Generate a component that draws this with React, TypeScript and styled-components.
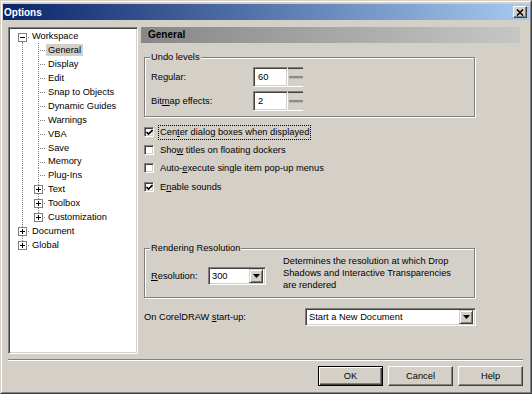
import React from "react"
import styled, { createGlobalStyle } from "styled-components"

const GlobalStyle = createGlobalStyle`
    html, body {
        margin: 0;
        padding: 0;
        background: #d4d0c8;
    }
    body {
        font-family: "Liberation Sans", Arial, sans-serif;
        font-size: 9.3px;
        color: #000;
    }
    * {
        box-sizing: border-box;
    }
`

const Window = styled.div`
    width: 532px;
    height: 394px;
    background: #d4d0c8;
    border: 1px solid;
    border-color: #d4d0c8 #404040 #404040 #d4d0c8;
    display: flex;
    flex-direction: column;
`

const Frame = styled.div`
    flex: 1;
    border: 1px solid;
    border-color: #fff #808080 #808080 #fff;
    padding: 2px 1px 1px 1px;
    display: flex;
    flex-direction: column;
`

const TitleBar = styled.div`
    height: 16px;
    background: linear-gradient(to right, #0a246a, #a6caf0);
    display: flex;
    align-items: center;
    justify-content: space-between;
    padding: 0 2px 0 1px;
`

const TitleText = styled.span`
    color: #fff;
    font-weight: bold;
    font-size: 10px;
`

const CloseButton = styled.div`
    width: 14px;
    height: 12px;
    background: #d4d0c8;
    border: 1px solid;
    border-color: #fff #404040 #404040 #fff;
    box-shadow: inset -1px -1px 0 #808080;
    display: flex;
    align-items: center;
    justify-content: center;
`

const Body = styled.div`
    flex: 1;
    display: flex;
    flex-direction: column;
    padding: 7px 6px 0 5px;
`

const Main = styled.div`
    display: flex;
    height: 327px;
`

const Sunken = styled.div`
    border: 1px solid;
    border-color: #808080 #fff #fff #808080;
    box-shadow: inset 1px 1px 0 #404040, inset -1px -1px 0 #d4d0c8;
    background: #fff;
`

const TreePanel = styled(Sunken)`
    width: 130px;
    padding: 1.5px 2px 2px 5px;
`

const TreeRowBox = styled.div`
    display: flex;
    align-items: center;
    height: 13.9px;
`

const GuideCell = styled.div<{ $v: "none" | "full" | "top" | "bottom"; $h: boolean }>`
    position: relative;
    width: 16px;
    height: 100%;
    flex: none;

    &::before {
        content: "";
        display: ${({ $v }) => ($v === "none" ? "none" : "block")};
        position: absolute;
        left: 8px;
        width: 1px;
        top: ${({ $v }) => ($v === "bottom" ? "50%" : "0")};
        height: ${({ $v }) => ($v === "full" ? "100%" : "50%")};
        background-image: linear-gradient(to bottom, #808080 50%, transparent 50%);
        background-size: 1px 2px;
    }

    &::after {
        content: "";
        display: ${({ $h }) => ($h ? "block" : "none")};
        position: absolute;
        left: 9px;
        top: 7px;
        width: 7px;
        height: 1px;
        background-image: linear-gradient(to right, transparent 50%, #808080 50%);
        background-size: 2px 1px;
    }
`

const Expander = styled.svg`
    position: absolute;
    left: 4px;
    top: 3px;
    z-index: 1;
`

const TreeLabel = styled.span<{ $selected?: boolean }>`
    padding: 0 2px;
    height: 12px;
    line-height: 12px;
    white-space: nowrap;
    background: ${({ $selected }) => ($selected ? "#d4d0c8" : "transparent")};
`

const RightPanel = styled.div`
    flex: 1;
    margin-left: 3px;
    display: flex;
    flex-direction: column;
`

const PageHeader = styled.div`
    height: 16px;
    line-height: 16px;
    margin-right: 3px;
    padding-left: 7px;
    font-weight: bold;
    font-size: 10px;
    background: linear-gradient(to right, #878787, #c6c6c6);
`

const Group = styled.fieldset<{ $top: number }>`
    width: 331px;
    margin: ${({ $top }) => $top}px 0 0 3px;
    padding: 0 5px 0 5px;
    border: 1px solid #808080;
    box-shadow: inset 1px 1px 0 #fff, 1px 1px 0 #fff;
    min-inline-size: 0;
`

const Legend = styled.legend`
    padding: 0 1px;
    line-height: 13px;
    background: #d4d0c8;
`

const UndoContent = styled.div`
    display: flex;
    flex-direction: column;
    gap: 4px;
    padding: 3px 0 5px 0;
`

const FieldRow = styled.div`
    display: flex;
    align-items: center;
`

const FieldLabel = styled.span<{ $width: number }>`
    width: ${({ $width }) => $width}px;
    padding-left: 1px;
`

const NumberInput = styled(Sunken)`
    width: 35px;
    height: 20px;
    padding-left: 4px;
    display: flex;
    align-items: center;
`

const Spin = styled.div`
    width: 15px;
    height: 20px;
    border-top: 1px solid #808080;
    box-shadow: inset 0 1px 0 #404040;
    border-bottom: 1px solid #fff;
    display: flex;
    align-items: center;
    justify-content: flex-end;

    &::after {
        content: "";
        width: 14px;
        height: 2px;
        background: #8c8c8c;
        box-shadow: 0 1px 0 #bdbab2;
    }
`

const CheckList = styled.div`
    display: flex;
    flex-direction: column;
    margin-top: 6px;
    margin-left: 3px;
`

const CheckRow = styled.div<{ $gap?: number }>`
    display: flex;
    align-items: center;
    height: 18px;
    margin-top: ${({ $gap }) => $gap ?? 0}px;
`

const CheckBox = styled(Sunken)`
    width: 10px;
    height: 10px;
    margin-right: 5px;
    display: flex;
    align-items: center;
    justify-content: center;
`

const CheckText = styled.span<{ $focused?: boolean }>`
    padding: 1px 1px;
    margin-left: -1px;
    border: 1px ${({ $focused }) => ($focused ? "dotted #000" : "solid transparent")};
    line-height: 11px;
`

const U = styled.span`
    text-decoration: underline;
`

const RenderContent = styled.div`
    display: flex;
    align-items: flex-start;
    padding-bottom: 6px;
`

const ResolutionBlock = styled.div`
    display: flex;
    align-items: center;
    margin-top: 12px;
`

const Description = styled.div`
    width: 175px;
    margin-left: 17px;
    line-height: 12px;
`

const SelectBox = styled(Sunken)<{ $width: number }>`
    width: ${({ $width }) => $width}px;
    height: 18px;
    display: flex;
    align-items: center;
    padding: 2px 2px 2px 3px;
`

const SelectValue = styled.span`
    flex: 1;
    white-space: nowrap;
    overflow: hidden;
`

const DropButton = styled.div`
    width: 14px;
    height: 14px;
    background: #d4d0c8;
    border: 1px solid;
    border-color: #d4d0c8 #404040 #404040 #d4d0c8;
    box-shadow: inset 1px 1px 0 #fff, inset -1px -1px 0 #808080;
    display: flex;
    align-items: center;
    justify-content: center;
`

const StartupRow = styled.div`
    display: flex;
    align-items: center;
    margin-top: 10px;
    margin-left: 2px;
`

const Separator = styled.div`
    height: 2px;
    margin-top: 5px;
    border-top: 1px solid #808080;
    border-bottom: 1px solid #fff;
`

const ButtonRow = styled.div`
    display: flex;
    justify-content: flex-end;
    gap: 5px;
    margin-top: 5px;
`

const DialogButton = styled.button<{ $default?: boolean }>`
    width: 65px;
    height: 20px;
    padding: 0;
    font-family: inherit;
    font-size: 9.3px;
    color: #000;
    background: #d4d0c8;
    border: 1px solid;
    border-color: ${({ $default }) => ($default ? "#000" : "#fff #404040 #404040 #fff")};
    box-shadow: ${({ $default }) =>
        $default
            ? "inset 1px 1px 0 #fff, inset -1px -1px 0 #404040, inset -2px -2px 0 #808080"
            : "inset -1px -1px 0 #808080"};
`

type Vert = "none" | "full" | "top" | "bottom"

interface Guide {
    v: Vert
    h: boolean
    box?: "plus" | "minus"
}

interface TreeItem {
    label: string
    guides: Guide[]
    selected?: boolean
}

const line: Guide = { v: "full", h: false }
const tee: Guide = { v: "full", h: true }

const treeItems: TreeItem[] = [
    { label: "Workspace", guides: [{ v: "bottom", h: true, box: "minus" }] },
    { label: "General", guides: [line, tee], selected: true },
    { label: "Display", guides: [line, tee] },
    { label: "Edit", guides: [line, tee] },
    { label: "Snap to Objects", guides: [line, tee] },
    { label: "Dynamic Guides", guides: [line, tee] },
    { label: "Warnings", guides: [line, tee] },
    { label: "VBA", guides: [line, tee] },
    { label: "Save", guides: [line, tee] },
    { label: "Memory", guides: [line, tee] },
    { label: "Plug-Ins", guides: [line, tee] },
    { label: "Text", guides: [line, { v: "full", h: true, box: "plus" }] },
    { label: "Toolbox", guides: [line, { v: "full", h: true, box: "plus" }] },
    { label: "Customization", guides: [line, { v: "top", h: true, box: "plus" }] },
    { label: "Document", guides: [{ v: "full", h: true, box: "plus" }] },
    { label: "Global", guides: [{ v: "top", h: true, box: "plus" }] },
]

const ExpanderBox: React.FC<{ kind: "plus" | "minus" }> = ({ kind }) => (
    <Expander width="9" height="9" viewBox="0 0 9 9">
        <rect x="0.5" y="0.5" width="8" height="8" fill="#fff" stroke="#808080" />
        <line x1="2" y1="4.5" x2="7" y2="4.5" stroke="#000" />
        {kind === "plus" && <line x1="4.5" y1="2" x2="4.5" y2="7" stroke="#000" />}
    </Expander>
)

const TreeRow: React.FC<{ item: TreeItem }> = ({ item }) => (
    <TreeRowBox>
        {item.guides.map((g, i) => (
            <GuideCell key={i} $v={g.v} $h={g.h}>
                {g.box && <ExpanderBox kind={g.box} />}
            </GuideCell>
        ))}
        <TreeLabel $selected={item.selected}>{item.label}</TreeLabel>
    </TreeRowBox>
)

const Check: React.FC<{ checked?: boolean }> = ({ checked }) => (
    <CheckBox>
        {checked && (
            <svg width="7" height="7" viewBox="0 0 7 7">
                <polyline points="0.5,3 2.5,5 6.5,1" fill="none" stroke="#000" strokeWidth="1.7" />
            </svg>
        )}
    </CheckBox>
)

const Arrow: React.FC = () => (
    <svg width="7" height="4" viewBox="0 0 7 4">
        <polygon points="0,0 7,0 3.5,4" fill="#000" />
    </svg>
)

const Select: React.FC<{ width: number; value: string }> = ({ width, value }) => (
    <SelectBox $width={width}>
        <SelectValue>{value}</SelectValue>
        <DropButton>
            <Arrow />
        </DropButton>
    </SelectBox>
)

const App: React.FC = () => (
    <>
        <GlobalStyle />
        <Window>
            <Frame>
                <TitleBar>
                    <TitleText>Options</TitleText>
                    <CloseButton>
                        <svg width="8" height="7" viewBox="0 0 8 7">
                            <path d="M1 0.5 L7 6.5 M7 0.5 L1 6.5" stroke="#000" strokeWidth="1.6" />
                        </svg>
                    </CloseButton>
                </TitleBar>
                <Body>
                    <Main>
                        <TreePanel>
                            {treeItems.map((item) => (
                                <TreeRow key={item.label} item={item} />
                            ))}
                        </TreePanel>
                        <RightPanel>
                            <PageHeader>General</PageHeader>
                            <Group $top={8}>
                                <Legend>Undo levels</Legend>
                                <UndoContent>
                                    <FieldRow>
                                        <FieldLabel $width={103}>Regular:</FieldLabel>
                                        <NumberInput>60</NumberInput>
                                        <Spin />
                                    </FieldRow>
                                    <FieldRow>
                                        <FieldLabel $width={103}>
                                            Bit<U>m</U>ap effects:
                                        </FieldLabel>
                                        <NumberInput>2</NumberInput>
                                        <Spin />
                                    </FieldRow>
                                </UndoContent>
                            </Group>
                            <CheckList>
                                <CheckRow>
                                    <Check checked />
                                    <CheckText $focused>
                                        Cen<U>t</U>er dialog boxes when displayed
                                    </CheckText>
                                </CheckRow>
                                <CheckRow>
                                    <Check />
                                    <CheckText>
                                        Sho<U>w</U> titles on floating dockers
                                    </CheckText>
                                </CheckRow>
                                <CheckRow>
                                    <Check />
                                    <CheckText>
                                        Auto-<U>e</U>xecute single item pop-up menus
                                    </CheckText>
                                </CheckRow>
                                <CheckRow $gap={1}>
                                    <Check checked />
                                    <CheckText>
                                        E<U>n</U>able sounds
                                    </CheckText>
                                </CheckRow>
                            </CheckList>
                            <Group $top={46}>
                                <Legend>Rendering Resolution</Legend>
                                <RenderContent>
                                    <ResolutionBlock>
                                        <FieldLabel $width={58}>
                                            <U>R</U>esolution:
                                        </FieldLabel>
                                        <Select width={58} value="300" />
                                    </ResolutionBlock>
                                    <Description>
                                        Determines the resolution at which Drop Shadows and Interactive
                                        Transparencies are rendered
                                    </Description>
                                </RenderContent>
                            </Group>
                            <StartupRow>
                                <FieldLabel $width={162}>
                                    On CorelDRAW <U>s</U>tart-up:
                                </FieldLabel>
                                <Select width={171} value="Start a New Document" />
                            </StartupRow>
                        </RightPanel>
                    </Main>
                    <Separator />
                    <ButtonRow>
                        <DialogButton $default>OK</DialogButton>
                        <DialogButton>Cancel</DialogButton>
                        <DialogButton>Help</DialogButton>
                    </ButtonRow>
                </Body>
            </Frame>
        </Window>
    </>
)

export default App
